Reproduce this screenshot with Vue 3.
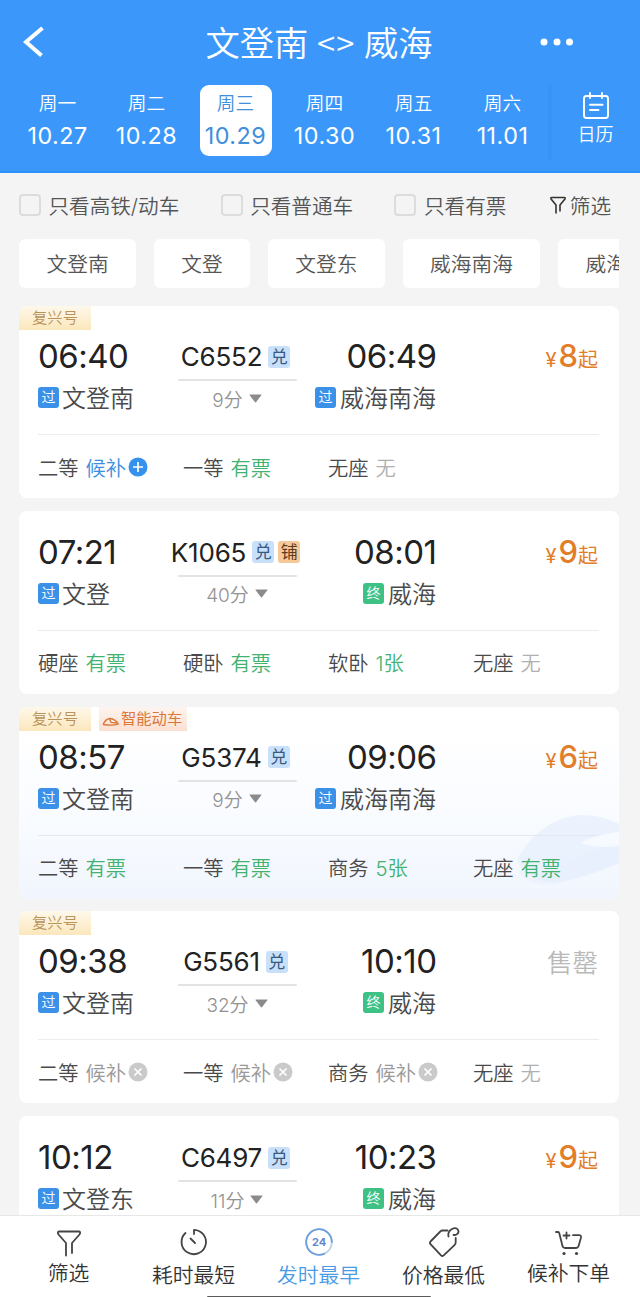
<script setup>
const days = [
  { w: '周一', d: '10.27' },
  { w: '周二', d: '10.28' },
  { w: '周三', d: '10.29', on: true },
  { w: '周四', d: '10.30' },
  { w: '周五', d: '10.31' },
  { w: '周六', d: '11.01' },
]
const checks = ['只看高铁/动车', '只看普通车', '只看有票']
const chips = ['文登南', '文登', '文登东', '威海南海', '威海']
const ok = (n, s = '有票') => ({ n, s, c: 'green' })
const none = (n) => ({ n, s: '无', c: 'gray' })
const closed = (n) => ({ n, s: '候补', c: 'mid', icon: 'x' })
const trains = [
  {
    tag: true, dep: '06:40', from: '文登南', no: 'C6552', dur: '9分', arr: '06:49', to: '威海南海', price: '8',
    seats: [{ n: '二等', s: '候补', c: 'blue', icon: 'plus' }, ok('一等'), none('无座')],
  },
  {
    dep: '07:21', from: '文登', no: 'K1065', berth: true, dur: '40分', arr: '08:01', to: '威海', end: true, price: '9',
    seats: [ok('硬座'), ok('硬卧'), ok('软卧', '1张'), none('无座')],
  },
  {
    tag: true, smart: true, dep: '08:57', from: '文登南', no: 'G5374', dur: '9分', arr: '09:06', to: '威海南海', price: '6',
    seats: [ok('二等'), ok('一等'), ok('商务', '5张'), ok('无座')],
  },
  {
    tag: true, dep: '09:38', from: '文登南', no: 'G5561', dur: '32分', arr: '10:10', to: '威海', end: true,
    seats: [closed('二等'), closed('一等'), closed('商务'), none('无座')],
  },
  {
    dep: '10:12', from: '文登东', no: 'C6497', dur: '11分', arr: '10:23', to: '威海', end: true, price: '9',
    seats: [],
  },
]
</script>

<template>
  <div class="screen">
    <header class="head">
      <div class="titlebar">
        <svg class="back" width="24" height="32" viewBox="0 0 24 32"><path d="M20.500 2 4 16l15.500 13.500" /></svg>
        <h1>文登南 <span class="arrows">&lt;&gt;</span> 威海</h1>
        <svg class="dots" width="34" height="8" viewBox="0 0 34 8"><circle cx="4" cy="4" r="3.500" /><circle cx="17" cy="4" r="3.500" /><circle cx="29.500" cy="4" r="3.500" /></svg>
      </div>
      <div class="dates">
        <div v-for="d in days" :key="d.d" class="day" :class="{ on: d.on }">
          <span class="wk">{{ d.w }}</span><span class="dt">{{ d.d }}</span>
        </div>
        <div class="calendar">
          <svg width="28" height="28" viewBox="0 0 28 28">
            <rect x="2" y="4" width="24" height="22" rx="2.500" />
            <path d="M8 1v5M20 1v5M8 12.800h12.500M8 18h8.500" />
          </svg>
          <span>日历</span>
        </div>
      </div>
    </header>

    <div class="filters">
      <label v-for="c in checks" :key="c" class="check"><i></i>{{ c }}</label>
      <div class="sift">
        <svg width="16" height="19" viewBox="0 0 16 19"><path d="M6 17.500V9L1.300 3.200Q.2 1.500 2 1.500H14Q15.800 1.500 14.700 3.200L10 9v6.500" /></svg>
        筛选
      </div>
    </div>

    <div class="chips"><span v-for="(c, i) in chips" :key="i">{{ c }}</span></div>

    <main class="list">
      <section v-for="t in trains" :key="t.no" class="card" :class="{ tagged: t.tag, smart: t.smart }">
        <svg v-if="t.smart" class="scene" width="102" height="86" viewBox="0 0 102 86">
          <path d="M0 47C10 24 34 3 64 1Q84 1 102 10V18Q76 21 64 29Q76 34 102 33V49Q70 62 40 68Q12 70 0 47Z" fill="#e2ecfd" opacity=".6" />
          <path d="M0 56Q28 66 50 50T102 31V49Q70 64 37 70Q12 74 0 56Z" fill="#e6eefd" opacity=".4" />
        </svg>
        <div v-if="t.tag" class="tags">
          <span class="fx">复兴号</span>
          <span v-if="t.smart" class="sm">
            <svg width="18" height="11" viewBox="0 0 18 11"><path d="M1 8.500Q4 2.500 8 2.500q5 .5 8.500 5.500-5 2-15.500.5M7.500 3l1.500 3.300 6 .7" /></svg>智能动车
          </span>
        </div>
        <div class="trip">
          <div class="side">
            <div class="time">{{ t.dep }}</div>
            <div class="stn"><b>过</b>{{ t.from }}</div>
          </div>
          <div class="mid-col">
            <div class="no"><span>{{ t.no }}</span><em>兑</em><em v-if="t.berth" class="berth">铺</em></div>
            <div class="line"></div>
            <div class="dur">{{ t.dur }}<svg width="13" height="9" viewBox="0 0 13 9"><path d="M1 .5h11q.8 0 .3.8L7.200 8q-.7.900-1.400 0L.7 1.300Q.200.5 1 .5Z" /></svg></div>
          </div>
          <div class="side right">
            <div class="time">{{ t.arr }}</div>
            <div class="stn"><b :class="{ end: t.end }">{{ t.end ? '终' : '过' }}</b>{{ t.to }}</div>
          </div>
          <div v-if="t.price" class="price"><small>¥</small><strong>{{ t.price }}</strong><span>起</span></div>
          <div v-else class="sold">售罄</div>
        </div>
        <div class="seats">
          <div v-for="s in t.seats" :key="s.n" class="seat">
            <span>{{ s.n }}</span><span class="st" :class="s.c">{{ s.s }}</span>
            <svg v-if="s.icon" class="mark" :class="s.icon" width="20" height="20" viewBox="0 0 20 20">
              <circle cx="10" cy="10" r="9.500" />
              <path v-if="s.icon === 'plus'" d="M10 5v10M5 10h10" />
              <path v-else d="M6.500 6.500l7 7M13.500 6.500l-7 7" />
            </svg>
          </div>
        </div>
      </section>
    </main>

    <nav class="nav">
      <div class="item edge">
        <svg width="30" height="32" viewBox="0 0 30 32"><path d="M12 28.500V16L4.500 7.500Q2.800 4.500 5.500 4.500H24.500Q27.200 4.500 25.500 7.500L18 16v10" /></svg>
        <span>筛选</span>
      </div>
      <div class="item">
        <svg width="30" height="32" viewBox="0 0 30 32"><path d="M15 8V3.800A12.200 12.200 0 1 1 6.500 7M11.500 12.500l4.500 4.500" /></svg>
        <span>耗时最短</span>
      </div>
      <div class="item on">
        <svg width="30" height="32" viewBox="0 0 30 32">
          <circle cx="15" cy="16" r="12.800" stroke="#bdd0ee" />
          <path d="M20 27.800A12.800 12.800 0 1 1 27.800 16" stroke="#6f9fdd" />
          <text x="15" y="19.800" text-anchor="middle">24</text>
        </svg>
        <span>发时最早</span>
      </div>
      <div class="item">
        <svg width="34" height="32" viewBox="0 0 34 32"><path d="M20.500 4.500H15.500Q14.200 4.500 13.300 5.500L3.500 15.500q-1.200 1.400 0 2.700L14 29.300q1.300 1.300 2.700 0l11-10.500q1-1 1-2.500V12M21.500 10.500Q20.500 5.500 25 3q4-2 6 .8 1.500 3-1.500 4.700-1.500.8-3 .3" /></svg>
        <span>价格最低</span>
      </div>
      <div class="item edge cart">
        <svg width="30" height="32" viewBox="0 0 30 32">
          <path d="M2 5h2q1 0 1.300 1.200L8.500 19q.5 2 2.500 2H22q2 0 2.600-2L27 10.500Q27.500 8.200 25 8.200H19M12.500 5.500v6M9.500 8.500h6" />
          <circle cx="10" cy="26.500" r="1.600" /><circle cx="22.500" cy="26.500" r="1.600" />
        </svg>
        <span>候补下单</span>
      </div>
      <div class="home"></div>
    </nav>
  </div>
</template>

<style>
body { background: #f4f4f5; }
</style>

<style scoped>
* { box-sizing: border-box; }
.screen { position: relative; width: 640px; height: 1297px; overflow: hidden; background: #f4f4f5; color: #4a4a4a; font-family: Inter, "Noto Sans CJK SC", sans-serif; font-weight: 350; display: flex; flex-direction: column; }
svg { flex: none; display: block; fill: none; }
.head { flex: none; height: 173px; background: #3b98fa; border-bottom: 2px solid #2c92fb; color: #fff; }
.titlebar { height: 85px; display: grid; grid-template-columns: 180px 1fr 180px; align-items: center; }
.back { margin-left: 22px; stroke: #fff; stroke-width: 4; margin-top: -1px; }
h1 { margin: 2px 0 0 -2px; font-size: 34.300px; font-weight: 350; line-height: 50px; white-space: nowrap; text-align: center; word-spacing: -1px; }
.arrows { font-size: 33px; font-weight: 400; line-height: 40px; font-family: "Noto Sans CJK SC", sans-serif; font-weight: 350; letter-spacing: 1px; }
.dots { justify-self: start; margin-left: 80px; margin-top: -1px; fill: #fff; }
.dates { display: flex; padding-left: 13px; height: 71px; }
.day { flex: none; width: 89px; display: flex; flex-direction: column; align-items: center; }
.day.on { width: 72px; margin: 0 8.500px; background: #fff; border-radius: 9px; color: #3f8fdc; }
.wk { font-size: 18.700px; line-height: 38px; height: 38px; }
.dt { font-size: 23.300px; line-height: 26px; font-weight: 400; letter-spacing: .5px; }
.day.on .dt { margin: 0 -5px; }
.calendar { margin-left: 1px; flex: 1; border-left: 4px solid #3793f8; padding: 7px 4px 0 3px; display: flex; flex-direction: column; align-items: center; font-size: 18px; line-height: 30px; height: 76px; }
.calendar svg { stroke: #fff; stroke-width: 1.900; stroke-linecap: round; }
.filters { flex: none; margin-top: 16px; height: 32px; padding: 0 29px 0 19px; display: flex; align-items: center; font-size: 20.600px; white-space: nowrap; color: #555; }
.check { display: flex; align-items: center; gap: 7.500px; margin-right: 41.400px; }
.check i { width: 22px; height: 22px; border: 2px solid #dcdcdc; border-radius: 4px; }
.sift { margin-left: auto; display: flex; align-items: center; gap: 4px; }
.sift svg { stroke: #333; stroke-width: 1.600; }
.chips { flex: none; margin: 18px 20px 0 19px; width: 600px; height: 49px; display: flex; gap: 17.700px; overflow: hidden; border-radius: 6px 0 0 6px; }
.chips span { flex: none; background: #fff; border-radius: 6px; padding: 1px 27.500px 0; line-height: 49px; font-size: 20.700px; color: #555; }
.list { margin-top: 18px; padding: 0 21px 0 19px; display: flex; flex-direction: column; gap: 12.800px; }
.card { position: relative; flex: none; height: 183px; background: #fff; border-radius: 8px; padding: 20px 20px 0 19px; overflow: hidden; }
.card.tagged { height: 192px; padding-top: 29px; }
.card.smart { background: linear-gradient(#fff 12%, #fafcff 50%, #f1f6fe 100%); }
.scene { position: absolute; right: 0; top: 107px; }
.tags { position: absolute; left: 0; top: 0; display: flex; gap: 8px; font-size: 15.300px; line-height: 23px; height: 24px; }
.fx { width: 72px; text-align: center; background: linear-gradient(#fef8eb, #fbe7bc); color: #b8935a; }
.sm { width: 88px; display: flex; align-items: center; padding-left: 3px; gap: 1px; background: linear-gradient(#fdf4ef, #fbe0d2); color: #d97839; font-weight: 400; white-space: nowrap; }
.sm svg { margin-top: 5px; stroke: #d97839; stroke-width: 1.300; }
.trip { position: relative; display: grid; grid-template-columns: 140px 119px 139px 1fr; height: 100px; border-bottom: 1px solid #ececec; }
.smart .trip { border-color: #e2e8f0; }
.time { font-size: 33px; line-height: 42px; height: 42px; font-weight: 400; color: #222; letter-spacing: -.5px; }
.right .time { margin-right: -.5px; }
.stn { display: flex; align-items: center; font-size: 24px; line-height: 36px; height: 44px; gap: 3px; white-space: nowrap; }
.right .stn { gap: 4px; }
.stn b { flex: none; width: 21px; height: 21px; border-radius: 3px; background: #3b91e8; color: #fff; font-weight: 350; font-size: 14px; line-height: 20px; text-align: center; margin-top: -3px; }
.stn b.end { background: #3dc184; }
.right { display: flex; flex-direction: column; align-items: flex-end; }
.mid-col { display: flex; flex-direction: column; align-items: center; }
.no { display: flex; align-items: center; gap: 4px; height: 43px; color: #222; font-size: 26px; font-weight: 400; letter-spacing: -.2px; margin-left: -4px; }
.no span { margin-right: 2px; }
.no em { flex: none; font-style: normal; font-weight: 400; width: 22px; height: 22px; border-radius: 3px; background: #c9e0fa; color: #385a80; font-size: 17px; line-height: 22px; text-align: center; letter-spacing: 0; }
.no em.berth { background: #f7c998; color: #5c3a1e; }
.line { width: 119px; height: 2px; margin-top: 1px; background: #e2e3e4; border-radius: 1px; }
.dur { display: flex; align-items: center; gap: 6px; font-size: 19px; height: 34px; color: #929292; margin-left: -1px; }
.dur svg { fill: #8b8b8b; }
.price { display: flex; justify-content: flex-end; align-items: baseline; height: 42px; line-height: 42px; color: #e27d28; font-weight: 400; margin-right: 1px; }
.price small { font-size: 20px; margin-right: 2px; }
.price strong { font-size: 31px; font-weight: 500; }
.price span { font-size: 20px; }
.sold { font-size: 25.500px; line-height: 45px; color: #b9b9b9; text-align: right; margin-right: 1px; }
.seats { position: relative; display: flex; height: 67px; align-items: center; }
.seat { flex: none; width: 145px; display: flex; align-items: center; font-size: 20.300px; white-space: nowrap; line-height: 30px; }
.st { margin-left: 7px; }
.green { color: #42b270; }
.blue { color: #3b8fe0; }
.gray { color: #b0b0b0; }
.mid { color: #999; }
.mark { margin-left: 2px; margin-top: -3px; }
.mark path { stroke: #fff; stroke-width: 1.700; }
.plus { fill: #3491ed; }
.x { fill: #cacaca; }
.nav { position: absolute; left: 0; right: 0; bottom: 0; height: 82px; background: #fff; border-top: 1px solid #e7e7e7; display: flex; padding: 10px 9px 0 6px; color: #333; }
.item { flex: 1; display: flex; flex-direction: column; align-items: center; font-size: 20.800px; line-height: 30px; white-space: nowrap; }
.item span { margin-top: 3px; }
.item svg { stroke: #444; stroke-width: 1.800; stroke-linecap: round; stroke-linejoin: round; }
.edge svg { margin-top: 1px; }
.edge span { margin-top: 0; }
.cart circle { fill: #444; stroke: none; }
.item.on { color: #4a9be6; }
.item.on text { fill: #6385d2; stroke: none; font-size: 11px; font-weight: 700; }
.home { position: absolute; left: 207px; bottom: 0; width: 224px; height: 1.500px; border-radius: 2px 2px 0 0; background: #5a5a5a; }
</style>
